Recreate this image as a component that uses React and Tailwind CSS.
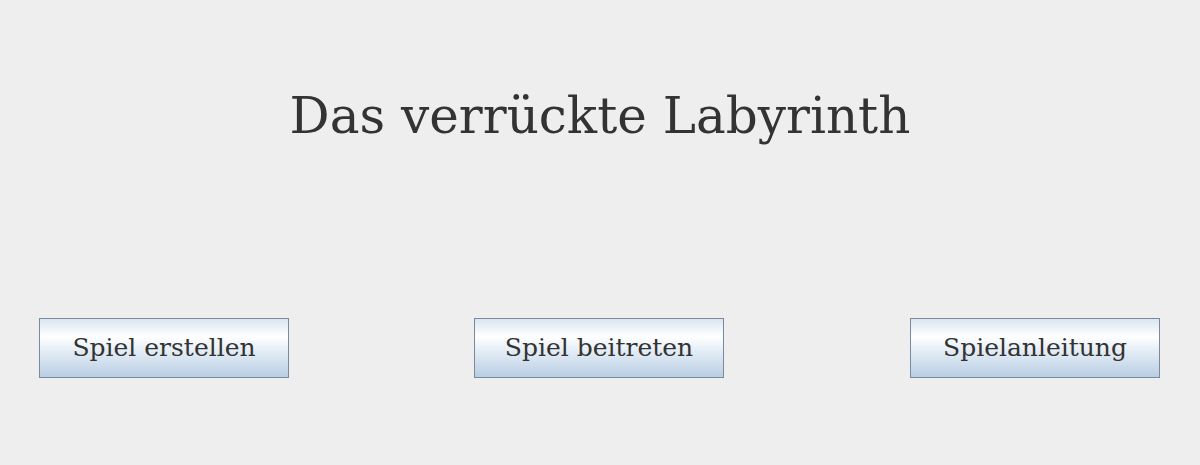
export default function App() {
  const btn =
    "w-[250px] h-[60px] shrink-0 border border-[#7a8a9c] bg-[linear-gradient(to_bottom,#dae5f1_0%,#ffffff_30%,#e4edf6_55%,#b9cee3_100%)] text-[25px] text-[#333333] flex items-center justify-center";
  return (
    <div className="w-[1200px] h-[465px] bg-[#eeeeee] flex flex-col" style={{ fontFamily: '"DejaVu Serif", serif' }}>
      <div className="h-[234px] pt-[84px] flex justify-center">
        <h1 className="text-[50px] leading-[64px] text-[#333333] font-normal">Das verrückte Labyrinth</h1>
      </div>
      <div className="pt-[84px] pl-[39px] flex">
        <button className={btn}>Spiel erstellen</button>
        <button className={btn + " ml-[185px]"}>Spiel beitreten</button>
        <button className={btn + " ml-[186px]"}>Spielanleitung</button>
      </div>
    </div>
  );
}
